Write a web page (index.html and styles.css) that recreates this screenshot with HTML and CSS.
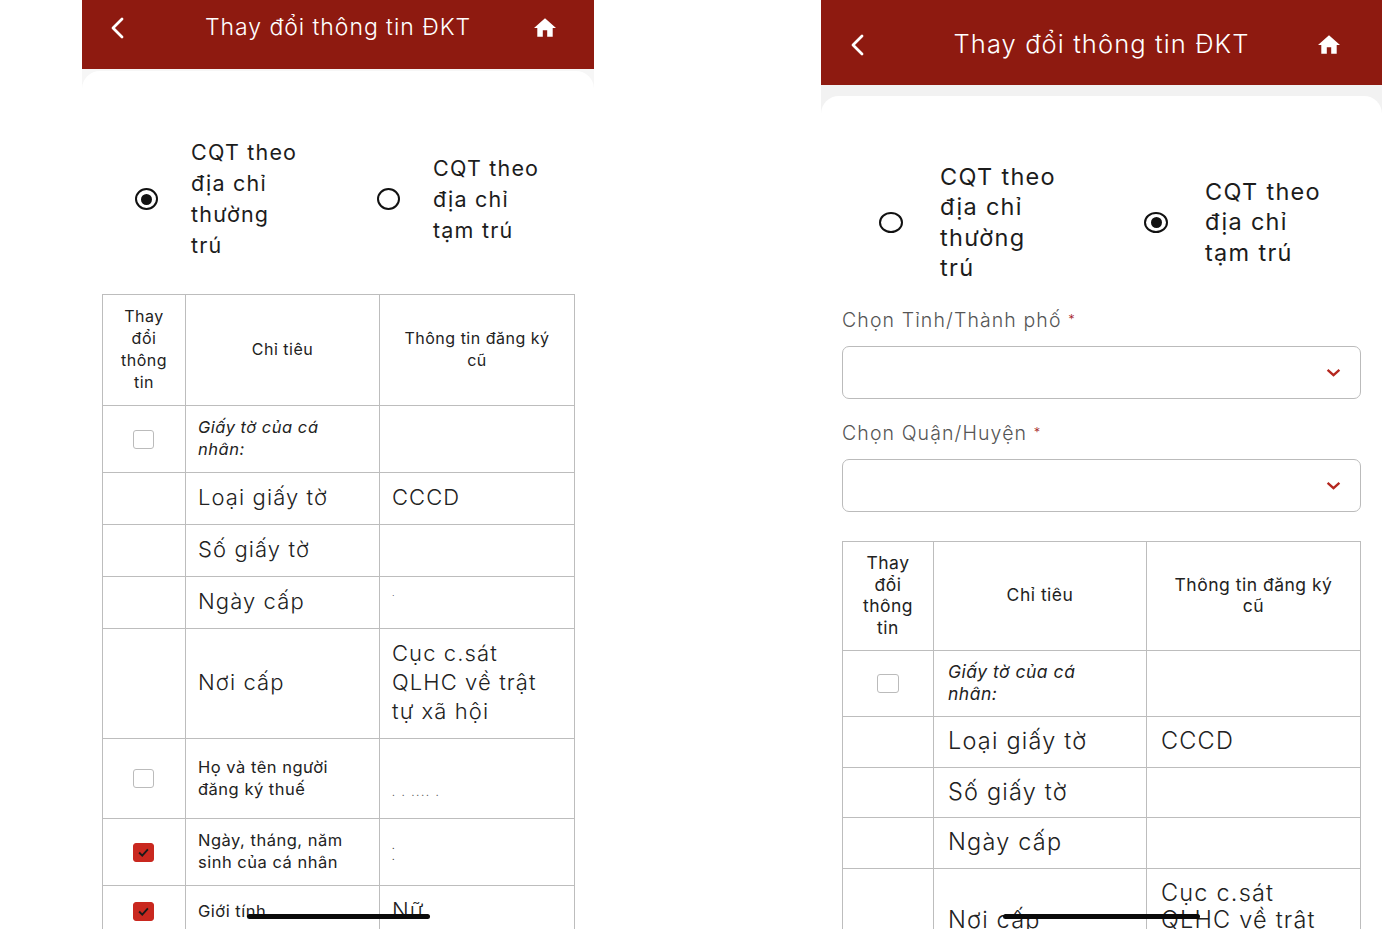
FILE: index.html
```html
<!DOCTYPE html>
<html lang="vi">
<head>
<meta charset="utf-8">
<title>Thay đổi thông tin ĐKT</title>
<link rel="stylesheet" href="styles.css">
</head>
<body>
<main class="stage">
  <section class="phone phone-a">
    <header class="bar">
      <svg class="back" viewBox="0 0 16 24"><path d="M13 3 4 12l9 9"/></svg>
      <h1 class="title">Thay đổi thông tin ĐKT</h1>
      <svg class="home" viewBox="2 3 20 17"><path d="M10 20v-6h4v6h5v-8h3L12 3 2 12h3v8z"/></svg>
    </header>
    <div class="card">
      <div class="options">
        <div class="option"><span class="radio on"></span><span class="opt-text">CQT theo<br>địa chỉ<br>thường<br>trú</span></div>
        <div class="option"><span class="radio"></span><span class="opt-text">CQT theo<br>địa chỉ<br>tạm trú</span></div>
      </div>
      <table class="grid">
        <colgroup><col class="c1"><col class="c2"><col class="c3"></colgroup>
        <tr><th>Thay<br>đổi<br>thông<br>tin</th><th>Chỉ tiêu</th><th>Thông tin đăng ký<br>cũ</th></tr>
        <tr><td class="mid"><span class="check"></span></td><td class="small em">Giấy tờ của cá<br>nhân:</td><td></td></tr>
        <tr><td></td><td class="big">Loại giấy tờ</td><td class="big">CCCD</td></tr>
        <tr><td></td><td class="big">Số giấy tờ</td><td></td></tr>
        <tr><td></td><td class="big">Ngày cấp</td><td class="big top"><span class="speck">.</span></td></tr>
        <tr><td></td><td class="big">Nơi cấp</td><td class="big">Cục c.sát<br>QLHC về trật<br>tự xã hội</td></tr>
        <tr class="tall"><td class="mid"><span class="check"></span></td><td class="small">Họ và tên người<br>đăng ký thuế</td><td class="bottom"><span class="speck wide">. . .... .</span></td></tr>
        <tr><td class="mid"><span class="check done"><svg viewBox="0 0 24 24"><path d="M5 12l5 5 9-10"/></svg></span></td><td class="small">Ngày, tháng, năm<br>sinh của cá nhân</td><td><span class="speck">.<br>.</span></td></tr>
        <tr><td class="mid"><span class="check done"><svg viewBox="0 0 24 24"><path d="M5 12l5 5 9-10"/></svg></span></td><td class="small">Giới tính</td><td class="big">Nữ</td></tr>
      </table>
    </div>
    <div class="handle"></div>
  </section>

  <section class="phone phone-b">
    <header class="bar">
      <svg class="back" viewBox="0 0 16 24"><path d="M13 3 4 12l9 9"/></svg>
      <h1 class="title">Thay đổi thông tin ĐKT</h1>
      <svg class="home" viewBox="2 3 20 17"><path d="M10 20v-6h4v6h5v-8h3L12 3 2 12h3v8z"/></svg>
    </header>
    <div class="card">
      <div class="options">
        <div class="option"><span class="radio"></span><span class="opt-text">CQT theo<br>địa chỉ<br>thường<br>trú</span></div>
        <div class="option"><span class="radio on"></span><span class="opt-text">CQT theo<br>địa chỉ<br>tạm trú</span></div>
      </div>
      <div class="field">
        <label class="label">Chọn Tỉnh/Thành phố <i class="req">*</i></label>
        <div class="select"><svg viewBox="0 0 14 8"><path d="M1.5 1.5 7 6.5l5.5-5"/></svg></div>
      </div>
      <div class="field">
        <label class="label">Chọn Quận/Huyện <i class="req">*</i></label>
        <div class="select"><svg viewBox="0 0 14 8"><path d="M1.5 1.5 7 6.5l5.5-5"/></svg></div>
      </div>
      <table class="grid">
        <colgroup><col class="c1"><col class="c2"><col class="c3"></colgroup>
        <tr><th>Thay<br>đổi<br>thông<br>tin</th><th>Chỉ tiêu</th><th>Thông tin đăng ký<br>cũ</th></tr>
        <tr><td class="mid"><span class="check"></span></td><td class="small em">Giấy tờ của cá<br>nhân:</td><td></td></tr>
        <tr><td></td><td class="big">Loại giấy tờ</td><td class="big">CCCD</td></tr>
        <tr><td></td><td class="big">Số giấy tờ</td><td></td></tr>
        <tr><td></td><td class="big">Ngày cấp</td><td></td></tr>
        <tr><td></td><td class="big">Nơi cấp</td><td class="big">Cục c.sát<br>QLHC về trật<br>tự xã hội</td></tr>
      </table>
    </div>
    <div class="handle"></div>
  </section>
</main>
</body>
</html>
```

FILE: styles.css
```css
* { box-sizing: border-box; }
html, body { margin: 0; background: #fff; }
body { font-family: Inter, "Noto Sans", sans-serif; color: #222; letter-spacing: .5px; }

.stage { display: flex; gap: 227px; padding-left: 82px; height: 929px; overflow: hidden; }
.phone { position: relative; flex: none; height: 929px; overflow: hidden; display: flex; flex-direction: column; }
.phone-a { width: 512px; background: #f6f6f6; }
.phone-b { width: 561px; background: #f2f2f2; }

.bar { flex: none; display: grid; grid-template-columns: 1fr auto 1fr; align-items: center; background: #8e1a10; color: #fff; }
.phone-a .bar { height: 69px; padding: 12px 27px 27px; }
.phone-b .bar { height: 85px; padding: 29px 28px 26px; }
.title { margin: 0; font-weight: 300; font-size: 23px; line-height: 30px; white-space: nowrap; letter-spacing: .95px; }
.phone-b .title { font-size: 25.5px; letter-spacing: 1.1px; }
.back { width: 16px; height: 24px; margin-top: 2px; fill: none; stroke: #fff; stroke-width: 2.8; stroke-linecap: round; stroke-linejoin: round; }
.home { width: 22px; height: 19px; fill: #fff; justify-self: end; }
.phone-a .home { margin-right: 11px; }
.phone-b .home { margin-right: 14px; }

.card { flex: 1; background: #fff; border-radius: 18px 18px 0 0; padding: 66px 20px 0; }
.phone-a .card { margin-top: 2px; }
.phone-b .card { margin-top: 11px; padding: 66px 21px 0; }

.options { display: flex; }
.phone-a .options { padding-left: 33px; margin-bottom: 33px; }
.phone-b .options { padding-left: 37px; }
.option { flex: none; display: flex; align-items: center; }
.phone-a .option { width: 242px; gap: 33px; }
.phone-b .option { width: 265px; gap: 37px; }
.radio { flex: none; width: 23px; height: 22px; border: 2.6px solid #111; border-radius: 50%; display: flex; align-items: center; justify-content: center; }
.radio.on::after { content: ""; width: 11px; height: 11px; border-radius: 50%; background: #111; }
.phone-b .radio { width: 24px; height: 21px; }
.opt-text { font-size: 21.5px; font-weight: 400; color: #1c1c1c; line-height: 31px; letter-spacing: 1.2px; white-space: nowrap; }
.phone-b .opt-text { font-size: 23.5px; line-height: 30.3px; letter-spacing: 1.3px; }

.label { display: block; font-size: 19.5px; font-weight: 300; line-height: 24px; color: #555; margin: 25px 0 14px; letter-spacing: 1.1px; }
.field + .field .label { margin-top: 22px; }
.req { font-style: normal; color: #a32020; font-size: 13px; line-height: 0; vertical-align: 3px; }
.select { height: 53px; border: 1.5px solid #bbb; border-radius: 7px; display: flex; align-items: center; justify-content: flex-end; padding-right: 19px; }
.select svg { width: 15px; height: 9px; fill: none; stroke: #b5271f; stroke-width: 2.2; }

.grid { border-collapse: collapse; table-layout: fixed; }
.phone-a .grid { width: 472px; }
.phone-b .grid { width: 518px; margin-top: 29px; }
.phone-a .c1 { width: 83px; } .phone-a .c2 { width: 194px; } .phone-a .c3 { width: 195px; }
.phone-b .c1 { width: 91px; } .phone-b .c2 { width: 213px; } .phone-b .c3 { width: 214px; }
.grid th, .grid td { border: 1.5px solid #bdbdbd; padding: 10px 12px 12px; vertical-align: middle; }
.phone-b .grid th, .phone-b .grid td { padding: 10px 14px 12px; }
.grid th { font-size: 16px; font-weight: 400; line-height: 22px; text-align: center; color: #222; }
.phone-b .grid th { font-size: 17.5px; line-height: 21.5px; }
.grid td { font-size: 16.5px; line-height: 22px; }
.phone-b .grid td { font-size: 17.5px; line-height: 21.5px; }
.grid td.em { font-style: italic; }
.grid td.big { font-size: 22px; font-weight: 300; line-height: 29px; letter-spacing: 1.1px; }
.phone-b .grid td.big { font-size: 23.5px; line-height: 27.5px; letter-spacing: 1.2px; }
.grid td.mid, .phone-b .grid td.mid { text-align: center; padding: 0; }
.grid td.top { vertical-align: top; }
.grid td.bottom { vertical-align: bottom; padding-bottom: 20px; }
.tall { height: 80px; }
.speck { font-size: 9px; line-height: 11px; color: #444; display: block; }
.speck.wide { letter-spacing: 2px; font-size: 10px; }

.check { display: inline-flex; align-items: center; justify-content: center; vertical-align: middle; width: 21px; height: 19px; margin: 0 2px 2px 0; border: 1.5px solid #bbb; border-radius: 3px; background: #fff; }
.phone-b .check { width: 22px; margin: 0 0 2px; }
.check.done { background: #c9281f; border-color: #c9281f; }
.check svg { width: 15px; height: 15px; fill: none; stroke: #1a1a1a; stroke-width: 3; }

.handle { position: absolute; height: 5px; background: #0a0a0a; border-radius: 3px; }
.phone-a .handle { left: 165px; width: 183px; top: 914px; }
.phone-b .handle { left: 182px; width: 197px; top: 914px; }
```
